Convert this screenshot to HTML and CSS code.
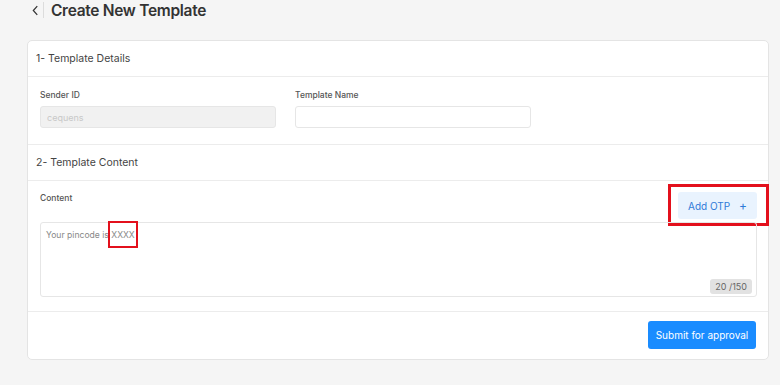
FILE: index.html
```html
<!DOCTYPE html>
<html lang="en">

<head>
    <meta charset="UTF-8">
    <meta name="viewport" content="width=device-width, initial-scale=1.0">
    <title>Create New Template</title>
    <link rel="stylesheet" href="styles.css">
</head>

<body>
    <div class="page-header">
        <button class="back-button">
            <svg viewBox="0 0 8 12" xmlns="http://www.w3.org/2000/svg">
                <path d="M6 1L1.5 6L6 11" />
            </svg>
        </button>
        <h1 class="page-title">Create New Template</h1>
    </div>

    <div class="card">
        <div class="section-title">1- Template Details</div>
        <div class="details-row">
            <div class="field">
                <label class="field-label">Sender ID</label>
                <input class="input input-disabled" type="text" placeholder="cequens" disabled>
            </div>
            <div class="field">
                <label class="field-label">Template Name</label>
                <input class="input" type="text">
            </div>
        </div>

        <div class="section-title">2- Template Content</div>
        <div class="content-area">
            <div class="content-top">
                <label class="field-label">Content</label>
                <div class="otp-wrap">
                    <button class="otp-button">Add OTP <span class="plus">+</span></button>
                </div>
            </div>
            <div class="message-box">
                <div class="message-text">Your pincode is <span class="marked">XXXX</span></div>
                <span class="counter">20 /150</span>
            </div>
        </div>

        <div class="card-footer">
            <button class="submit-button">Submit for approval</button>
        </div>
    </div>
</body>

</html>
```

FILE: styles.css
```css
body {
    margin: 0;
    padding: 0 11px 0 27px;
    background-color: #f5f5f5;
    font-family: 'Inter', 'Liberation Sans', sans-serif;
    color: #333;
}

.page-header {
    display: flex;
    align-items: center;
    height: 20px;
    margin-bottom: 20px;
}

.back-button {
    display: flex;
    align-items: center;
    justify-content: center;
    width: 12px;
    height: 16px;
    margin-left: 5px;
    padding: 0 4px 0 0;
    border: none;
    border-right: 1px solid #dcdcdc;
    background: none;
    cursor: pointer;
}

.back-button svg {
    width: 7px;
    height: 11px;
    fill: none;
    stroke: #333;
    stroke-width: 1.4;
}

.page-title {
    margin: 0 0 0 7px;
    font-size: 15.5px;
    font-weight: 600;
    letter-spacing: -0.3px;
    color: #333;
}

.card {
    background-color: #fff;
    border: 1px solid #e4e4e4;
    border-radius: 5px;
}

.section-title {
    height: 35px;
    line-height: 35px;
    padding-left: 8px;
    font-size: 10.5px;
    font-weight: 400;
    color: #444;
    border-bottom: 1px solid #ececec;
}

.details-row {
    display: flex;
    gap: 19px;
    padding: 12px 12px 16px;
    border-bottom: 1px solid #ececec;
}

.field {
    display: flex;
    flex-direction: column;
}

.field-label {
    height: 12px;
    line-height: 12px;
    margin-bottom: 5px;
    font-size: 8.5px;
    font-weight: 500;
    color: #555;
}

.input {
    box-sizing: border-box;
    width: 236px;
    height: 22px;
    padding: 0 6px;
    border: 1px solid #e6e6e6;
    border-radius: 3px;
    background-color: #fff;
    font-family: inherit;
    font-size: 9px;
}

.input-disabled {
    background-color: #f1f1f1;
}

.input-disabled::placeholder {
    color: #c8c8c8;
}

.content-area {
    padding: 11px 11px 14px 12px;
    border-bottom: 1px solid #ececec;
}

.content-top {
    display: flex;
    justify-content: space-between;
    align-items: flex-start;
    margin-bottom: 3px;
}

.otp-wrap {
    position: relative;
}

/* annotation box */
.otp-wrap::after {
    content: "";
    position: absolute;
    top: -8px;
    left: -10px;
    right: -12px;
    bottom: -7px;
    border: 3px solid #e3101c;
}

.otp-button {
    width: 79px;
    height: 27px;
    padding: 0;
    border: none;
    border-radius: 3px;
    background-color: #e9f3fe;
    color: #2f7ad8;
    font-family: inherit;
    font-size: 10px;
    cursor: pointer;
}

.plus {
    margin-left: 6px;
    font-size: 12px;
}

.message-box {
    position: relative;
    box-sizing: border-box;
    height: 75px;
    padding: 6px 5px;
    border: 1px solid #e6e6e6;
    border-radius: 3px;
}

.message-text {
    font-size: 8.6px;
    line-height: 12px;
    color: #888;
}

.marked {
    position: relative;
}

.marked::after {
    content: "";
    position: absolute;
    top: -9px;
    left: -3px;
    right: -3px;
    bottom: -8px;
    border: 2.5px solid #e3101c;
}

.counter {
    position: absolute;
    right: 4px;
    bottom: 2px;
    padding: 2px 5px;
    border-radius: 3px;
    background-color: #e2e2e2;
    color: #666;
    font-size: 9px;
    line-height: 11px;
}

.card-footer {
    display: flex;
    justify-content: flex-end;
    padding: 9px 12px 10px;
}

.submit-button {
    width: 108px;
    height: 28px;
    padding: 0;
    border: none;
    border-radius: 3px;
    background-color: #1a8cff;
    color: #fff;
    font-family: inherit;
    font-size: 10px;
    cursor: pointer;
}
```
